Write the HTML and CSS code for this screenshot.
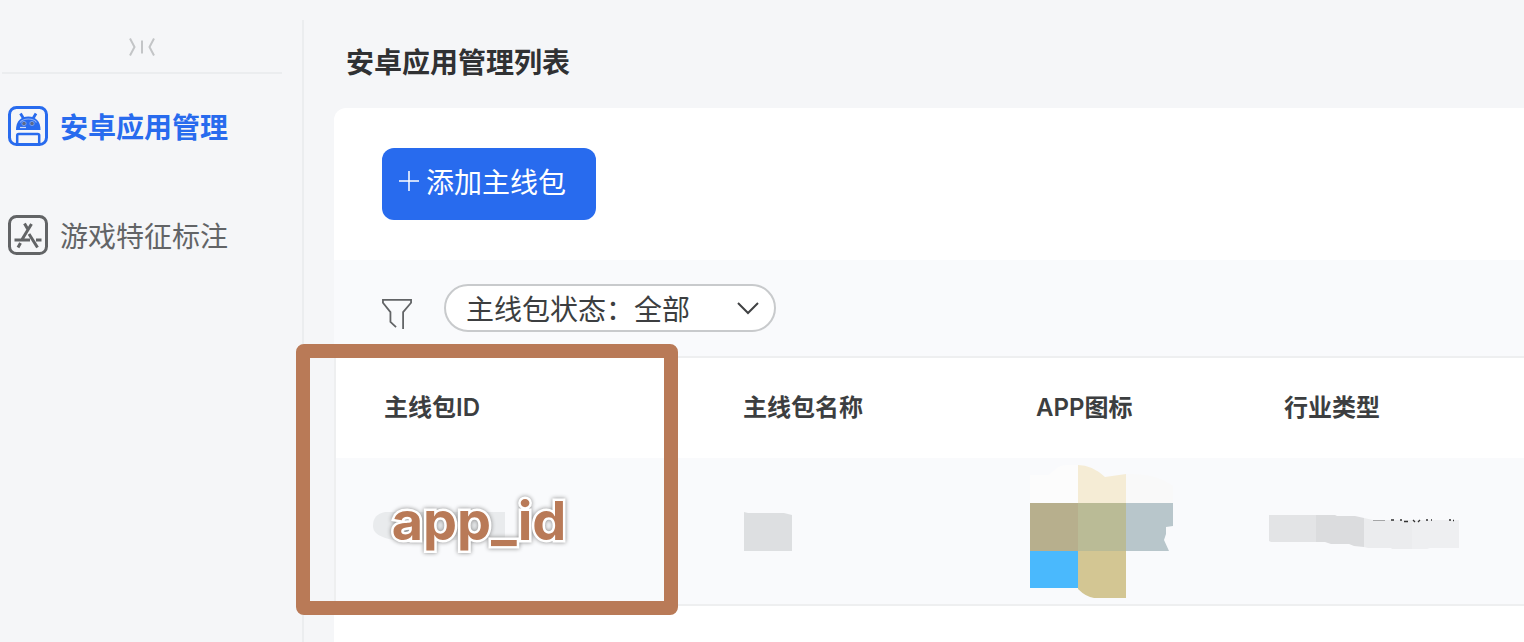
FILE: index.html
```html
<!DOCTYPE html>
<html lang="zh-CN">
<head>
<meta charset="utf-8">
<title>安卓应用管理列表</title>
<link rel="stylesheet" href="styles.css">
</head>
<body>
<div class="layout">
  <aside class="sidebar">
    <button class="collapse" type="button" aria-label="收起菜单">
      <svg width="28" height="20" viewBox="0 0 28 20" fill="none" stroke="#c3c5c7" stroke-width="2"><path d="M2 1.500l4.500 8.500L2 18.500M14 3.500v13M26 1.500L21.500 10l4.500 8.500"/></svg>
    </button>
    <nav class="menu">
      <a class="menu-item active" href="#android">
        <svg width="40" height="40" viewBox="0 0 40 40" fill="none" stroke="currentColor">
          <rect x="1.500" y="1.500" width="37" height="37" rx="7" stroke-width="3"/>
          <path d="M12.500 7.500l3 5M28 7.500l-3 5" stroke-width="2.800"/>
          <path d="M8 24c0-9 5-13.500 12.300-13.500S32.500 15 32.500 24z" fill="currentColor" stroke="none"/>
          <path d="M12 16.500c2-2.500 4-3.500 8.300-3.500 4 0 6.500 1 8.200 3.500" stroke="#8fb2f6" stroke-width="1.200"/>
          <circle cx="16" cy="17.500" r="2.200" fill="#5c6a88" stroke="#6f9af2"/>
          <circle cx="24" cy="17.500" r="2.200" fill="#5c6a88" stroke="#6f9af2"/>
          <path d="M12 21.500h6" stroke="#c7d8fa" stroke-width="1.200"/>
          <path d="M9.200 38V29.500q0-1.500 1.500-1.500h19q1.500 0 1.500 1.500V38" stroke-width="2.500"/>
        </svg>
        <span>安卓应用管理</span>
      </a>
      <a class="menu-item" href="#features">
        <svg width="40" height="40" viewBox="0 0 40 40" fill="none" stroke="currentColor" stroke-width="3">
          <rect x="1.500" y="1.500" width="37" height="37" rx="7"/>
          <path d="M16.500 8.500l3.500 6M23.500 9L14 24.500M6.500 25h15.500M28 25h5.500M21 19l8.500 13.500M12.500 28L10 32.500"/>
        </svg>
        <span>游戏特征标注</span>
      </a>
    </nav>
  </aside>
  <main class="main">
    <h1 class="title">安卓应用管理列表</h1>
    <section class="card">
      <div class="toolbar">
        <button class="add" type="button">
          <svg width="20" height="20" viewBox="0 0 20 20" stroke="currentColor" stroke-width="1.500"><path d="M10 0v20M0 10h20"/></svg>
          <span>添加主线包</span>
        </button>
      </div>
      <div class="filters">
        <svg class="funnel" width="30" height="30" viewBox="0 0 32 32" fill="none" stroke="#626466" stroke-width="1.900"><path d="M22.500 32V14L31 4V1H1V4L9 14v10.500l6 5.500"/></svg>
        <div class="select-wrap">
          <select class="status" aria-label="主线包状态"><option>主线包状态：全部</option></select>
          <svg class="chevron" width="22" height="13" viewBox="0 0 22 13" fill="none" stroke="#404244" stroke-width="2"><path d="M1 1l10 10L21 1"/></svg>
        </div>
      </div>
      <div class="table-wrap">
        <table class="table">
          <thead>
            <tr><th class="col-id">主线包ID</th><th class="col-name">主线包名称</th><th class="col-icon">APP图标</th><th class="col-type">行业类型</th></tr>
          </thead>
          <tbody>
            <tr>
              <td class="col-id"><svg width="134" height="30" viewBox="0 0 134 30"><path d="M12 0H132V26L36 30C14 28 0 24 0 14Q0 2 12 0Z" fill="#e9ebed"/></svg></td>
              <td class="col-name"><svg width="48" height="39" viewBox="0 0 48 39"><path d="M0 0l4 1h36l8 2v36H0z" fill="#dddfe1"/></svg></td>
              <td class="col-icon">
                <svg width="144" height="134" viewBox="0 0 144 134">
                  <path d="M0 10h18l10-8q4-2 8-2h12v38H0z" fill="#fcfcfc"/>
                  <path d="M48 0q14 0 27 12l21-3v29H48z" fill="#f5ecd5"/>
                  <path d="M96 9q30-1 47 12v17H96z" fill="#f9f9f9"/>
                  <path d="M0 38h48v48H0z" fill="#b7af8d"/>
                  <path d="M48 38h48v48H48z" fill="#babb96"/>
                  <path d="M96 38h47v23l-7 1v7l-2 6 5 11H96z" fill="#b8c6cb"/>
                  <path d="M0 86h48v37H0z" fill="#4ab9fd"/>
                  <path d="M48 86h48v47H64q-8-1-16-9z" fill="#d3c693"/>
                </svg>
              </td>
              <td class="col-type">
                <svg width="190" height="36" viewBox="0 0 190 36">
                  <path d="M0 1h47v27H2l-2-1z" fill="#e3e4e6"/>
                  <path d="M47 1h19l2 1h18l9 2v29l-10-1-5-2H62l-6-2h-9z" fill="#dbdcde"/>
                  <path d="M95 4l9 2h39v29h-20l-1-1H99l-4-1z" fill="#ebecee"/>
                  <path d="M143 6h47v28h-29l-3 1h-15z" fill="#eeeff1"/>
                  <path d="M104 6.500h12" stroke="#a5a6a7"/>
                  <path d="M122 6h3M131 6h2M135 7.500h4M144 6l2 2M149 8l2-2M157 6h2M162 6h1M180 6h2M184 6.500h1" stroke="#333" stroke-width="1.300"/>
                </svg>
              </td>
            </tr>
          </tbody>
        </table>
        <div class="highlight"><span class="note">app_id</span></div>
      </div>
    </section>
  </main>
</div>
</body>
</html>
```

FILE: styles.css
```css
* { box-sizing: border-box; }
body {
  margin: 0;
  background: #f5f6f8;
  color: #303133;
  font-family: "Liberation Sans", "Noto Sans CJK SC", sans-serif;
  font-size: 28px;
}
svg { display: block; flex: none; }
button { border: 0; font: inherit; cursor: pointer; }
.layout { display: flex; min-height: 100vh; overflow: hidden; }
.sidebar {
  flex: none;
  width: 304px;
  margin-top: 20px;
  border-right: 2px solid #ebedef;
}
.collapse {
  display: flex;
  justify-content: center;
  align-items: center;
  width: 280px;
  height: 54px;
  margin-left: 2px;
  padding: 2px 0 0;
  background: none;
  border-bottom: 2px solid #ebedef;
}
.menu { display: flex; flex-direction: column; gap: 69px; padding: 32px 8px; }
.menu-item {
  display: flex;
  align-items: center;
  gap: 12px;
  height: 40px;
  color: #626466;
  text-decoration: none;
}
.menu-item span { line-height: 40px; padding-top: 6px; }
.menu-item.active { color: #286bee; font-weight: 700; }
.main { flex: 1; min-width: 0; display: flex; flex-direction: column; padding-left: 30px; }
.title {
  margin: 0;
  padding: 44px 12px 24px;
  font-size: 28px;
  line-height: 40px;
  font-weight: 700;
}
.card {
  flex: 1;
  background: #fff;
  border-top-left-radius: 12px;
}
.toolbar { padding: 40px 48px; }
.add {
  display: flex;
  align-items: center;
  gap: 7px;
  height: 72px;
  padding: 0 30px 6px 17px;
  border-radius: 12px;
  background: #286bee;
  color: #fff;
}
.filters {
  display: flex;
  align-items: center;
  gap: 32px;
  height: 96px;
  padding: 0 48px;
  background: #f9fafc;
}
.funnel { margin-top: 12px; }
.select-wrap { position: relative; }
.status {
  display: block;
  appearance: none;
  width: 332px;
  height: 48px;
  padding: 4px 60px 0 20px;
  border: 2px solid #c8cacc;
  border-radius: 24px;
  background: #fff;
  color: #3c3e40;
  font: inherit;
}
.chevron { position: absolute; right: 17px; top: 18px; pointer-events: none; }
.table-wrap { position: relative; border-top: 2px solid #eeeff0; }
.table { width: 100%; table-layout: fixed; border-collapse: separate; border-spacing: 0; border-left: 2px solid #eeeff0; }
.table th {
  height: 100px;
  padding: 0 0 5px 48px;
  text-align: left;
  font-size: 24px;
  font-weight: 600;
  color: #3c3e40;
  font-family: Inter, "Noto Sans CJK SC", sans-serif;
}
.table td { height: 148px; padding: 2px 0 0; background: #f9fafc; border-bottom: 2px solid #eeeff0; }
.table th.col-id { width: 359px; }
.table th.col-name { width: 293px; }
.table th.col-icon { width: 248px; }
.table td.col-id { padding-left: 37px; padding-bottom: 10px; }
.table td.col-name { padding-top: 0; padding-left: 49px; }
.table td.col-icon { padding-left: 42px; }
.table td.col-type { padding-left: 33px; }
.highlight {
  position: absolute;
  left: -38px;
  top: -14px;
  width: 382px;
  height: 271px;
  display: flex;
  justify-content: center;
  align-items: flex-end;
  padding: 0 16px 48px 0;
  border: 14px solid #b97a57;
  border-radius: 8px;
}
.note {
  font-family: Inter, sans-serif;
  font-size: 54px;
  line-height: 64px;
  font-weight: 700;
  color: #b97a57;
  -webkit-text-stroke: 5px #fff;
  paint-order: stroke fill;
  filter: drop-shadow(0 0 2px #888);
}
```
